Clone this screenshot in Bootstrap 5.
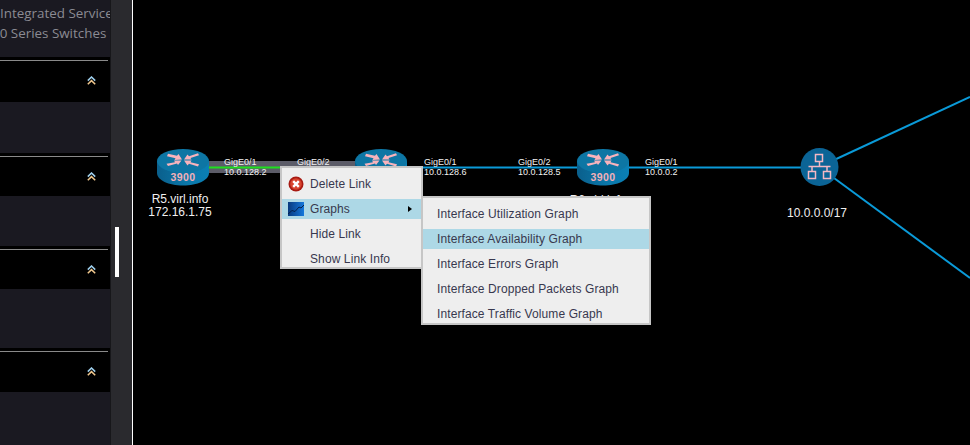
<!DOCTYPE html>
<html lang="en">
<head>
    <meta charset="UTF-8">
    <meta name="viewport" content="width=device-width, initial-scale=1.0">
    <title>Topology</title>
    <link href="https://cdn.jsdelivr.net/npm/bootstrap@5.3.6/dist/css/bootstrap.min.css" rel="stylesheet">
    <style>
        html, body { height: 100%; }
        body {
            background: #000;
            overflow: hidden;
            font-family: "Liberation Sans", Arial, sans-serif;
        }
        .app-shell { width: 970px; height: 445px; }
        .side-panel { width: 110px; height: 445px; overflow: hidden; }
        .intro-text {
            height: 57px;
            background: #1a1921;
            color: #8b8b93;
            font-family: "Open Sans", sans-serif;
            font-size: 13.4px;
            line-height: 20px;
            white-space: nowrap;
            padding-top: 3px;
        }
        .intro-text div:last-child { margin-left: -8px; }
        .acc-head {
            background: #000;
            padding-top: 3px;
            height: 45px;
            flex-shrink: 0;
        }
        .acc-head hr {
            margin: 0 2px 0 0;
            border: 0;
            height: 1px;
            background: #8a8a8a;
            opacity: 1;
        }
        .acc-arrow { margin: 15px 14px 0 0; display: block; }
        .acc-body { background: #1a1921; flex-shrink: 0; }
        .body-a { height: 51px; }
        .body-b { height: 50px; }
        .body-c { height: 59px; }
        .body-d { height: 53px; }
        .head-short { height: 43px; }
        .head-mid { height: 44px; }
        .scroll-rail {
            width: 23px;
            height: 445px;
            background: #2a2a2e;
            border-left: 1px solid #17171a;
            border-right: 1px solid #fff;
            padding-top: 227px;
            padding-left: 4px;
        }
        .scroll-thumb { width: 4px; height: 50px; background: #fff; }
        .topo-canvas { flex: 1; height: 445px; position: relative; overflow: hidden; }
        .topo-svg { position: absolute; left: -133px; top: 0; }
        .node-label { fill: #f0f0f0; font-size: 12px; text-anchor: middle; }
        .link-label { fill: #f2f2f2; font-size: 9px; }
        .ctx-menu {
            display: block;
            position: absolute;
            min-width: 0;
            margin: 0;
            padding: 3px 0;
            background: #eeeeee;
            border: 2px solid #c6c6c6;
            border-radius: 0;
            font-size: 12px;
            letter-spacing: .1px;
            z-index: 5;
        }
        .ctx-main { left: 147px; top: 166px; width: 143px; height: 103px; }
        .ctx-sub { left: 288px; top: 196px; width: 230px; height: 129px; }
        .ctx-menu .dropdown-item {
            display: flex;
            align-items: center;
            height: 25px;
            padding: 0 0 0 28px;
            color: #38384e;
            position: relative;
        }
        .ctx-sub .dropdown-item { padding-left: 14px; }
        .ctx-menu .ctx-on { background: #add8e6; height: 20px; margin: 2.5px 0; }
        .ctx-icon { position: absolute; left: 6px; top: 50%; transform: translateY(-50%); }
        .ctx-caret {
            position: absolute;
            right: 9px;
            top: 7px;
            border-left: 4px solid #000;
            border-top: 3px solid transparent;
            border-bottom: 3px solid transparent;
        }
    </style>
</head>
<body>
    <div class="app-shell d-flex">
        <div class="side-panel d-flex flex-column">
            <div class="intro-text">
                <div>Integrated Services</div>
                <div>50 Series Switches and</div>
            </div>
            <div class="acc-head"><hr><svg class="acc-arrow ms-auto" width="9" height="9" viewBox="0 0 9 9"><use href="#chev"/></svg></div>
            <div class="acc-body body-a"></div>
            <div class="acc-head head-short"><hr><svg class="acc-arrow ms-auto" width="9" height="9" viewBox="0 0 9 9"><use href="#chev"/></svg></div>
            <div class="acc-body body-b"></div>
            <div class="acc-head head-short"><hr><svg class="acc-arrow ms-auto" width="9" height="9" viewBox="0 0 9 9"><use href="#chev"/></svg></div>
            <div class="acc-body body-c"></div>
            <div class="acc-head head-mid"><hr><svg class="acc-arrow ms-auto" width="9" height="9" viewBox="0 0 9 9"><use href="#chev"/></svg></div>
            <div class="acc-body body-d"></div>
        </div>
        <div class="scroll-rail"><div class="scroll-thumb"></div></div>
        <div class="topo-canvas">
            <svg class="topo-svg" width="970" height="445" viewBox="0 0 970 445">
                <defs>
                    <g id="chev" fill="none" stroke-width="1.5">
                        <path d="M.8 4.600 4.500 1 8.200 4.600" stroke="#9fd0ee"/>
                        <path d="M.8 8.200 4.500 4.600 8.200 8.200" stroke="#f2c98f"/>
                    </g>
                    <linearGradient id="routerSide" x1="0" x2="1" y1="0" y2="0">
                        <stop offset="0" stop-color="#0a5f8c"/>
                        <stop offset=".6" stop-color="#0b78aa"/>
                        <stop offset="1" stop-color="#0a7fb5"/>
                    </linearGradient>
                    <linearGradient id="graphFill" x1="0" x2="1" y1="0" y2="0">
                        <stop offset="0" stop-color="#07397e"/>
                        <stop offset="1" stop-color="#1478dc"/>
                    </linearGradient>
                    <g id="router">
                        <path d="M0 12v12c0 7 11.500 12.500 26 12.500s26-5.500 26-12.500V12z" fill="url(#routerSide)"/>
                        <ellipse cx="26" cy="12" rx="26" ry="12" fill="#0d76a4"/>
                        <g fill="#f7b3bc" transform="translate(0 .8) scale(1 .85)">
                            <path d="M11 4.500 20 7 21.500 5 25 11.500 17.500 12 18.500 10 10 7.500z"/>
                            <path d="M41 4 32 7.500 30.500 5.500 27 11.500 34.500 11.500 33.500 9.500 42 6.500z"/>
                            <path d="M11 19 20 16 21 18 24.500 12.500 17 12.500 18 14.500 9.500 16.500z"/>
                            <path d="M42 17 33.500 14.500 34.500 12.500 27 12.500 30.500 18.500 32 16.500 41 19.500z"/>
                        </g>
                        <text x="26" y="32" text-anchor="middle" font-size="10.500" font-weight="700" fill="#f4b0b8" letter-spacing=".4">3900</text>
                    </g>
                </defs>

                <rect x="208" y="161" width="172" height="12" fill="#5c5c68"/>
                <line x1="208" y1="167.500" x2="282" y2="167.500" stroke="#1ee01e" stroke-width="2"/>
                <line x1="405" y1="167.500" x2="820" y2="167.500" stroke="#0a9ad8" stroke-width="2"/>
                <line x1="819" y1="167" x2="970" y2="97" stroke="#0a9ad8" stroke-width="2"/>
                <line x1="819" y1="167" x2="970" y2="278" stroke="#0a9ad8" stroke-width="2"/>

                <use href="#router" x="157" y="149"/>
                <use href="#router" x="355" y="149"/>
                <use href="#router" x="577" y="149"/>

                <text class="link-label" x="224" y="165">GigE0/1</text>
                <text class="link-label" x="224" y="175">10.0.128.2</text>
                <text class="link-label" x="297" y="165">GigE0/2</text>
                <text class="link-label" x="424" y="165">GigE0/1</text>
                <text class="link-label" x="424" y="175">10.0.128.6</text>
                <text class="link-label" x="518" y="165">GigE0/2</text>
                <text class="link-label" x="518" y="175">10.0.128.5</text>
                <text class="link-label" x="645" y="165">GigE0/1</text>
                <text class="link-label" x="645" y="175">10.0.0.2</text>

                <text class="node-label" x="180" y="203">R5.virl.info</text>
                <text class="node-label" x="180" y="216">172.16.1.75</text>
                <text class="node-label" x="598" y="204">R6.virl.info</text>
                <text class="node-label" x="817" y="217">10.0.0.0/17</text>

                <circle cx="819.500" cy="167" r="19" fill="#0b6496"/>
                <g fill="none" stroke="#f4b8c4" stroke-width="1.500">
                    <rect x="815.500" y="154.500" width="7" height="7"/>
                    <rect x="808.500" y="171.500" width="7" height="7"/>
                    <rect x="823.500" y="171.500" width="7" height="7"/>
                    <path d="M819.500 161.500v5M808.500 166.500h22M812 166.500v5M827 166.500v5"/>
                </g>
            </svg>

            <div class="dropdown-menu show ctx-menu ctx-main">
                <a class="dropdown-item" href="#">
                    <svg class="ctx-icon" width="16" height="16" viewBox="0 0 16 16">
                        <circle cx="8" cy="8" r="7.500" fill="#a81a12"/>
                        <circle cx="8" cy="8" r="5.800" fill="#d8442f"/>
                        <path d="M5.200 5.200 10.800 10.800M10.800 5.200 5.200 10.800" stroke="#fff" stroke-width="2.400"/>
                    </svg>
                    Delete Link
                </a>
                <a class="dropdown-item ctx-on" href="#">
                    <svg class="ctx-icon" width="16" height="14" viewBox="0 0 16 14">
                        <rect width="16" height="14" fill="url(#graphFill)"/>
                        <path d="M0 12 4 8.500 7 9.500 11 5 13 6 16 3" fill="none" stroke="#04204a" stroke-width="1"/>
                    </svg>
                    Graphs
                    <span class="ctx-caret"></span>
                </a>
                <a class="dropdown-item" href="#">Hide Link</a>
                <a class="dropdown-item" href="#">Show Link Info</a>
            </div>

            <div class="dropdown-menu show ctx-menu ctx-sub">
                <a class="dropdown-item" href="#">Interface Utilization Graph</a>
                <a class="dropdown-item ctx-on" href="#">Interface Availability Graph</a>
                <a class="dropdown-item" href="#">Interface Errors Graph</a>
                <a class="dropdown-item" href="#">Interface Dropped Packets Graph</a>
                <a class="dropdown-item" href="#">Interface Traffic Volume Graph</a>
            </div>
        </div>
    </div>
    <script src="https://cdn.jsdelivr.net/npm/bootstrap@5.3.6/dist/js/bootstrap.bundle.min.js"></script>
</body>
</html>
